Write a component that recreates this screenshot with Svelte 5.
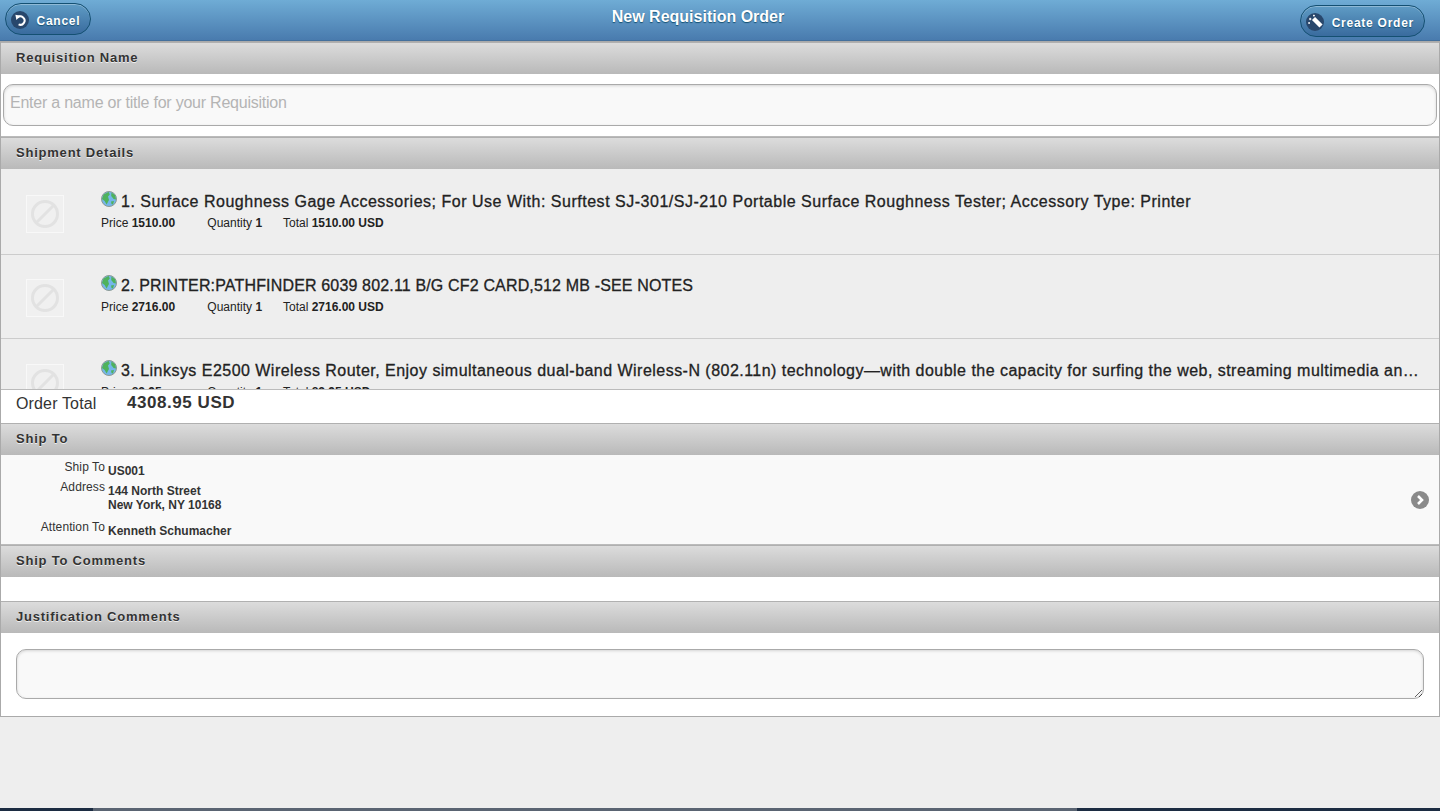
<script>
  const items = [
    {
      title: '1. Surface Roughness Gage Accessories; For Use With: Surftest SJ-301/SJ-210 Portable Surface Roughness Tester; Accessory Type: Printer',
      price: '1510.00',
      qty: '1',
      total: '1510.00 USD',
      track: 0.51
    },
    {
      title: '2. PRINTER:PATHFINDER 6039 802.11 B/G CF2 CARD,512 MB -SEE NOTES',
      price: '2716.00',
      qty: '1',
      total: '2716.00 USD',
      track: 0.16
    },
    {
      title: '3. Linksys E2500 Wireless Router, Enjoy simultaneous dual-band Wireless-N (802.11n) technology—with double the capacity for surfing the web, streaming multimedia and gaming',
      price: '82.95',
      qty: '1',
      total: '82.95 USD',
      track: 0.47
    }
  ];
</script>

<div class="page">
  <header class="topbar">
    <button type="button" class="btn">
      <span class="btn-icon">
        <svg viewBox="0 0 18 18" width="18" height="18">
          <path d="M6.6 6.4 A4.2 4.2 0 1 1 7.6 13.4" fill="none" stroke="#fff" stroke-width="2" />
          <path d="M4.4 3.8 L9.6 4.8 L5.4 9 Z" fill="#fff" />
        </svg>
      </span>
      <span class="btn-text">Cancel</span>
    </button>
    <h1>New Requisition Order</h1>
    <button type="button" class="btn btn-create">
      <span class="btn-icon">
        <svg viewBox="0 0 18 18" width="18" height="18">
          <path d="M7.5 5.5 L15 13" stroke="#fff" stroke-width="4.4" />
          <path d="M3 6 h2.4 M4.2 4.8 v2.4 M7 2.6 h1.8 M7.9 1.7 v1.8 M2.2 10 h1.8 M3.1 9.1 v1.8" stroke="#fff" stroke-width="1" />
        </svg>
      </span>
      <span class="btn-text">Create Order</span>
    </button>
  </header>

  <main class="content">
    <h2 class="bar">Requisition Name</h2>
    <div class="name-box">
      <input type="text" placeholder="Enter a name or title for your Requisition" />
    </div>

    <h2 class="bar">Shipment Details</h2>
    <div class="items">
      {#each items as item}
        <div class="item">
          <div class="thumb">
            <svg viewBox="0 0 38 38" width="38" height="38">
              <rect x="0.5" y="0.5" width="37" height="37" fill="#f0f0f0" stroke="#f8f8f8" />
              <circle cx="19" cy="19" r="12.5" fill="none" stroke="#e2e2e2" stroke-width="3" />
              <path d="M10.5 27.5 L27.5 10.5" stroke="#e2e2e2" stroke-width="3" />
            </svg>
          </div>
          <div class="item-text">
            <div class="item-title">
              <svg class="globe" viewBox="0 0 16 16" width="16" height="16">
                <circle cx="8" cy="8" r="7.5" fill="#74b6ea" stroke="#8c9a94" />
                <path d="M2.6 3.4 L7.6 1 L8.8 3.6 L7 5.6 L8 9 L5.6 13.4 L3.6 10 L1 8 Z" fill="#4fb25c" />
                <path d="M10.4 1.6 L14.2 4.2 L15 8.4 L12.6 8 L10.2 5 Z" fill="#4fb25c" />
                <path d="M10 10.5 L13 10 L12 13.5 L10.5 13 Z" fill="#4fb25c" />
              </svg>
              <span style:letter-spacing="{item.track}px">{item.title}</span>
            </div>
            <div class="item-meta">
              <span class="price">Price <b>{item.price}</b></span>
              <span class="qty">Quantity <b>{item.qty}</b></span>
              <span>Total <b>{item.total}</b></span>
            </div>
          </div>
        </div>
      {/each}
    </div>

    <div class="order-total">
      <span class="label">Order Total</span>
      <b>4308.95 USD</b>
    </div>

    <h2 class="bar">Ship To</h2>
    <div class="ship-to">
      <dl>
        <dt>Ship To</dt>
        <dd>US001</dd>
        <dt>Address</dt>
        <dd class="addr">144 North Street<br />New York, NY 10168</dd>
        <dt>Attention To</dt>
        <dd>Kenneth Schumacher</dd>
      </dl>
      <svg class="chevron" viewBox="0 0 18 18" width="18" height="18">
        <circle cx="9" cy="9" r="9" fill="#8a8a8a" />
        <path d="M7 5 L11 9 L7 13" fill="none" stroke="#fff" stroke-width="2.6" />
      </svg>
    </div>

    <h2 class="bar">Ship To Comments</h2>
    <div class="blank"></div>

    <h2 class="bar">Justification Comments</h2>
    <div class="comment-box">
      <textarea></textarea>
    </div>
  </main>

  <div class="bottom-strip"></div>
</div>

<style>
  :global(body) {
    margin: 0;
    background: #eee;
    font-family: "Liberation Sans", Arial, sans-serif;
  }
  .page {
    height: 811px;
    display: flex;
    flex-direction: column;
    overflow: hidden;
    background: #eee;
  }
  .topbar {
    height: 41px;
    box-sizing: border-box;
    flex: none;
    display: flex;
    justify-content: space-between;
    align-items: flex-start;
    padding: 3px 15px 0 5px;
    position: relative;
    background: linear-gradient(#6facd5, #497bae);
    border-bottom: 1px solid #44709c;
  }
  .topbar h1 {
    position: absolute;
    left: 0;
    right: 44px;
    top: 8px;
    margin: 0;
    text-align: center;
    color: #fff;
    font-size: 16px;
    line-height: 18px;
    font-weight: bold;
    text-shadow: 0 1px 1px #145072;
  }
  .btn {
    height: 32px;
    display: flex;
    align-items: center;
    gap: 7.5px;
    padding: 2px 10px 0 5px;
    border: 1px solid #145072;
    border-radius: 16px;
    background: linear-gradient(#5f9cc5, #396b9e);
    box-shadow: inset 0 1px 0 rgba(255, 255, 255, 0.3);
    color: #fff;
    font-family: inherit;
    font-size: 12px;
    font-weight: bold;
    letter-spacing: 0.75px;
    text-shadow: 0 1px 1px #145072;
  }
  .btn-text {
    margin-top: 2px;
  }
  .btn-create {
    margin-top: 2px;
  }
  .btn-icon {
    width: 18px;
    height: 18px;
    border-radius: 9px;
    background: #28476c;
    display: block;
  }
  .btn-icon svg {
    display: block;
  }
  .content {
    flex: none;
    height: 676px;
    box-sizing: border-box;
    background: #fff;
    border: 1px solid #aaa;
  }
  .bar {
    margin: 0;
    height: 32px;
    box-sizing: border-box;
    padding-left: 15px;
    border-top: 1px solid #b0b0b0;
    background: linear-gradient(#dcdcdc, #b9b9b9);
    color: #333;
    font-size: 13px;
    font-weight: bold;
    line-height: 30px;
    letter-spacing: 0.78px;
    text-shadow: 0 1px 0 #eee;
  }
  .name-box {
    height: 63px;
    box-sizing: border-box;
    padding: 10px 2px 0;
    border-bottom: 1px solid #bbb;
  }
  .name-box input {
    display: block;
    width: 100%;
    height: 42px;
    box-sizing: border-box;
    padding: 0 6px 5px;
    border: 1px solid #aaa;
    border-radius: 10px;
    background: #f9f9f9;
    box-shadow: inset 0 1px 3px rgba(0, 0, 0, 0.15);
    font-family: inherit;
    font-size: 16px;
    letter-spacing: -0.23px;
    outline: none;
  }
  .name-box input::placeholder {
    color: #b4b4b4;
  }
  .items {
    height: 220px;
    padding-top: 1px;
    overflow: hidden;
    background: #eee;
    box-sizing: border-box;
  }
  .item {
    height: 84.5px;
    box-sizing: border-box;
    display: flex;
    border-bottom: 1px solid #ccc;
  }
  .thumb {
    width: 100px;
    flex: none;
    padding: 24.5px 0 0 25px;
    box-sizing: border-box;
  }
  .thumb svg {
    display: block;
  }
  .item-text {
    min-width: 0;
    flex: 1;
    padding: 20.5px 18px 0 0;
  }
  .item-title {
    display: flex;
    align-items: flex-start;
    gap: 4px;
    color: #222;
    font-size: 16px;
    line-height: 21px;
    -webkit-text-stroke: 0.3px #222;
  }
  .item-title span {
    overflow: hidden;
    white-space: nowrap;
    text-overflow: ellipsis;
  }
  .globe {
    flex: none;
  }
  .item-meta {
    margin-top: 3px;
    color: #222;
    font-size: 12px;
    line-height: 16px;
  }
  .price {
    display: inline-block;
    width: 103px;
  }
  .qty {
    display: inline-block;
    width: 72.5px;
  }
  .order-total {
    height: 34px;
    box-sizing: border-box;
    display: flex;
    align-items: flex-start;
    padding-left: 15px;
    border-top: 1px solid #bbb;
    background: #fff;
    color: #333;
  }
  .order-total .label {
    width: 111px;
    font-size: 16px;
    line-height: 28px;
    letter-spacing: 0.15px;
  }
  .order-total b {
    font-size: 17px;
    line-height: 26px;
    letter-spacing: 0.55px;
  }
  .ship-to {
    position: relative;
    height: 90px;
    box-sizing: border-box;
    background: #f9f9f9;
    border-bottom: 1px solid #bbb;
    padding-top: 5px;
  }
  .ship-to dl {
    margin: 0;
    display: grid;
    grid-template-columns: 104px 1fr;
    column-gap: 3px;
    color: #333;
  }
  .ship-to dt {
    text-align: right;
    font-size: 12px;
    line-height: 14px;
    letter-spacing: 0.1px;
  }
  .ship-to dd {
    margin: 0;
    padding-top: 4px;
    font-size: 12px;
    font-weight: bold;
    line-height: 14px;
    height: 20px;
    box-sizing: border-box;
  }
  .ship-to dd.addr {
    height: 40px;
  }
  .chevron {
    position: absolute;
    right: 10px;
    top: 36px;
  }
  .blank {
    height: 24px;
  }
  .comment-box {
    padding: 16px 15px 0;
  }
  .comment-box textarea {
    display: block;
    width: 100%;
    height: 50px;
    box-sizing: border-box;
    border: 1px solid #aaa;
    border-radius: 10px;
    background: #f9f9f9;
    box-shadow: inset 0 1px 3px rgba(0, 0, 0, 0.15);
    outline: none;
  }
  .bottom-strip {
    margin-top: auto;
    height: 3px;
    flex: none;
    background: linear-gradient(90deg, #1c2c42 0 93px, #5a6472 93px 1077px, #1c2c42 1077px);
  }
</style>
